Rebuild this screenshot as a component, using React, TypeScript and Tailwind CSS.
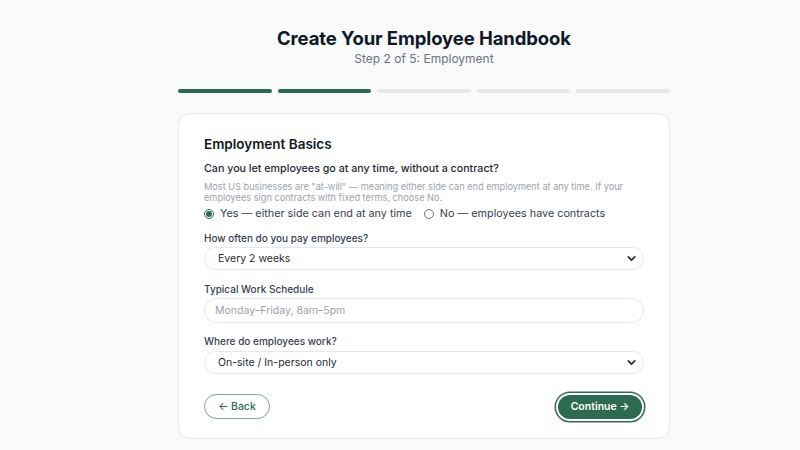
import { ChevronDown } from "lucide-react";

const steps = [true, true, false, false, false];

export default function App() {
  return (
    <div className="min-h-screen w-full bg-[#f9fafb] pl-[48px] font-['Inter',sans-serif] text-[#111827]">
      <div className="mx-auto w-[492px] pt-[27px]">
        <h1 className="text-center text-[18.5px] font-bold leading-[22px] tracking-[-0.1px]">
          Create Your Employee Handbook
        </h1>
        <p className="mt-[2px] text-center text-[12px] leading-[16px] text-[#6b7280]">
          Step 2 of 5: Employment
        </p>

        <div className="mt-[22px] flex gap-[6px]">
          {steps.map((done, i) => (
            <div
              key={i}
              className={done ? "h-[4px] flex-1 rounded-full bg-[#2d6a4f]" : "h-[4px] flex-1 rounded-full bg-[#e5e7eb]"}
            />
          ))}
        </div>

        <div className="mt-[20px] rounded-[12px] border border-[#e5e7eb] bg-white px-[25px] pb-[19px] pt-[21px]">
          <h2 className="text-[13.5px] font-semibold leading-[18px]">Employment Basics</h2>

          <p className="mt-[9px] text-[10.7px] font-medium leading-[14px] text-[#1f2937]">
            Can you let employees go at any time, without a contract?
          </p>
          <p className="mt-[5px] text-[9.2px] leading-[11px] text-[#9ca3af]">
            Most US businesses are "at-will" — meaning either side can end employment at any time. If your
            employees sign contracts with fixed terms, choose No.
          </p>
          <div className="mt-[4px] flex items-center gap-[12px] text-[10.8px] leading-[14px] text-[#374151]">
            <label className="flex items-center gap-[6px]">
              <span className="flex h-[10px] w-[10px] items-center justify-center rounded-full border border-[#2d6a4f]">
                <span className="h-[6px] w-[6px] rounded-full bg-[#2d6a4f]" />
              </span>
              Yes — either side can end at any time
            </label>
            <label className="flex items-center gap-[6px]">
              <span className="h-[10px] w-[10px] rounded-full border border-[#6b7280]" />
              No — employees have contracts
            </label>
          </div>

          <p className="mt-[10px] text-[10px] font-medium leading-[14px] text-[#374151]">How often do you pay employees?</p>
          <div className="mt-[2px] flex h-[23px] items-center justify-between rounded-full border border-[#e5e7eb] pl-[13px] pr-[5px] text-[10.5px] text-[#1f2937]">
            <span>Every 2 weeks</span>
            <ChevronDown size={13} strokeWidth={3} className="text-[#1f2937]" />
          </div>

          <p className="mt-[12px] text-[10px] font-medium leading-[14px] text-[#374151]">Typical Work Schedule</p>
          <div className="mt-[2px] flex h-[25px] items-center rounded-full border border-[#e5e7eb] pl-[10px] text-[10.5px] text-[#9ca3af]">
            Monday–Friday, 8am–5pm
          </div>

          <p className="mt-[11px] text-[10px] font-medium leading-[14px] text-[#374151]">Where do employees work?</p>
          <div className="mt-[3px] flex h-[23px] items-center justify-between rounded-full border border-[#e5e7eb] pl-[13px] pr-[5px] text-[10.5px] text-[#1f2937]">
            <span>On-site / In-person only</span>
            <ChevronDown size={13} strokeWidth={3} className="text-[#1f2937]" />
          </div>

          <div className="mt-[20px] flex items-center justify-between">
            <button className="flex h-[25px] w-[66px] items-center justify-center rounded-full border border-[#2d6a4f]/60 text-[10.5px] font-medium text-[#2d6a4f]">
              ← Back
            </button>
            <button className="mr-[2px] flex h-[24px] w-[84px] items-center justify-center rounded-full bg-[#2d6a4f] text-[10.5px] font-semibold text-white ring-[1.5px] ring-[#2d6a4f] ring-offset-[2px] ring-offset-white">
              Continue →
            </button>
          </div>
        </div>
      </div>
    </div>
  );
}
